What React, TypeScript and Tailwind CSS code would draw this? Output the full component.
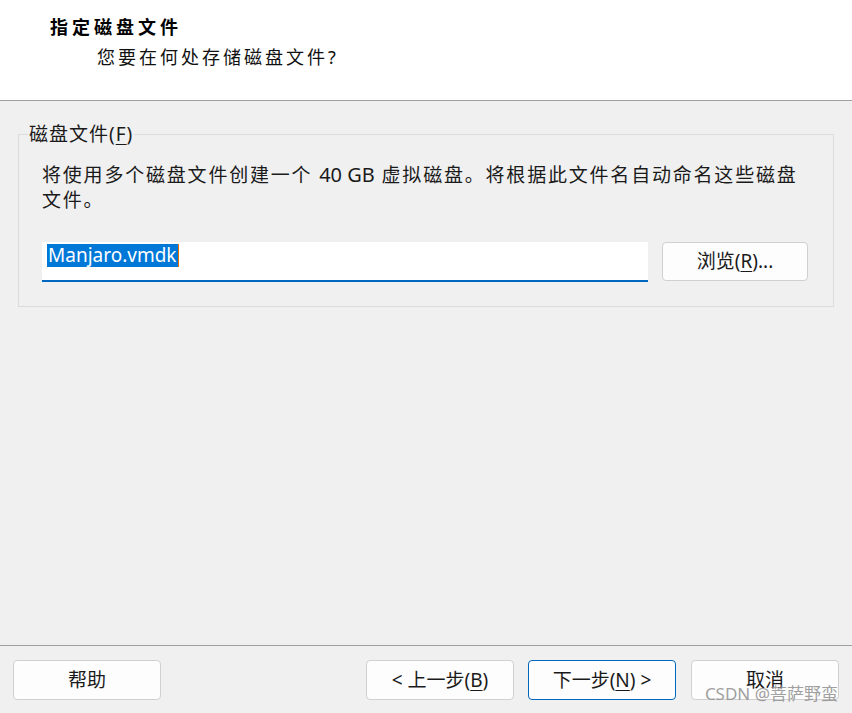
const FONT = "font-['Noto_Sans','Noto_Sans_CJK_SC',sans-serif]";

function DialogButton({
  children,
  primary = false,
}: {
  children: React.ReactNode;
  primary?: boolean;
}) {
  return (
    <button
      className={`flex h-[40px] w-[148px] items-center justify-center rounded-[4px] border bg-[#fdfdfd] text-[19px] text-[#1a1a1a] ${
        primary ? "border-[#0067c0]" : "border-[#d0d0d0]"
      }`}
    >
      {children}
    </button>
  );
}

export default function App() {
  return (
    <div
      className={`relative flex h-[713px] w-[852px] flex-col overflow-hidden bg-[#f0f0f0] ${FONT}`}
    >
      {/* header */}
      <div className="h-[101px] shrink-0 border-b border-[#a0a0a0] bg-white">
        <div className="pl-[50px] pt-[14px] text-[18px] font-bold leading-[26px] tracking-[4px] text-black">
          指定磁盘文件
        </div>
        <div className="pl-[97px] pt-[4px] text-[18px] leading-[26px] tracking-[3px] text-[#111]">
          您要在何处存储磁盘文件?
        </div>
      </div>

      {/* body */}
      <div className="flex-1 px-[18px] pt-[20px]">
        <fieldset className="border border-[#dcdcdc] px-[23px] pb-[24px]">
          <legend className="-ml-[14px] px-[1px] text-[19px] leading-[26px] tracking-[1px] text-[#1a1a1a]">
            磁盘文件(<span className="underline underline-offset-[3px]">F</span>)
          </legend>
          <p className="mt-[15px] text-[19px] leading-[25px] tracking-[1.8px] text-[#1a1a1a]">
            将使用多个磁盘文件创建一个{" "}
            <span className="tracking-normal text-[20px]">40 GB</span>{" "}
            虚拟磁盘。将根据此文件名自动命名这些磁盘
            <br />
            文件。
          </p>
          <div className="mt-[29px] flex items-start gap-[14px]">
            <div className="flex h-[40px] w-[606px] items-start border-b-2 border-[#0067c0] bg-white pl-[5px] pt-[2px]">
              <span className="border-r border-[#e07000] bg-[#0078d7] px-[1px] text-[19px] leading-[23px] text-white">
                Manjaro.vmdk
              </span>
            </div>
            <button className="flex h-[39px] w-[146px] items-center justify-center rounded-[4px] border border-[#d0d0d0] bg-[#fdfdfd] text-[19px] text-[#1a1a1a]">
              浏览(<span className="underline underline-offset-[3px]">R</span>)...
            </button>
          </div>
        </fieldset>
      </div>

      {/* footer */}
      <div className="flex h-[68px] shrink-0 items-start border-t border-[#a0a0a0] px-[13px] pt-[14px]">
        <DialogButton>帮助</DialogButton>
        <div className="flex-1" />
        <DialogButton>
          &lt; 上一步(<span className="underline underline-offset-[3px]">B</span>)
        </DialogButton>
        <div className="w-[14px]" />
        <DialogButton primary>
          下一步(<span className="underline underline-offset-[3px]">N</span>) &gt;
        </DialogButton>
        <div className="w-[15px]" />
        <DialogButton>取消</DialogButton>
      </div>

      {/* watermark */}
      <div className="pointer-events-none absolute bottom-[8px] right-[14px] text-[17px] leading-[22px] text-[#8a8a8a] opacity-80">
        CSDN @菩萨野蛮
      </div>
    </div>
  );
}
